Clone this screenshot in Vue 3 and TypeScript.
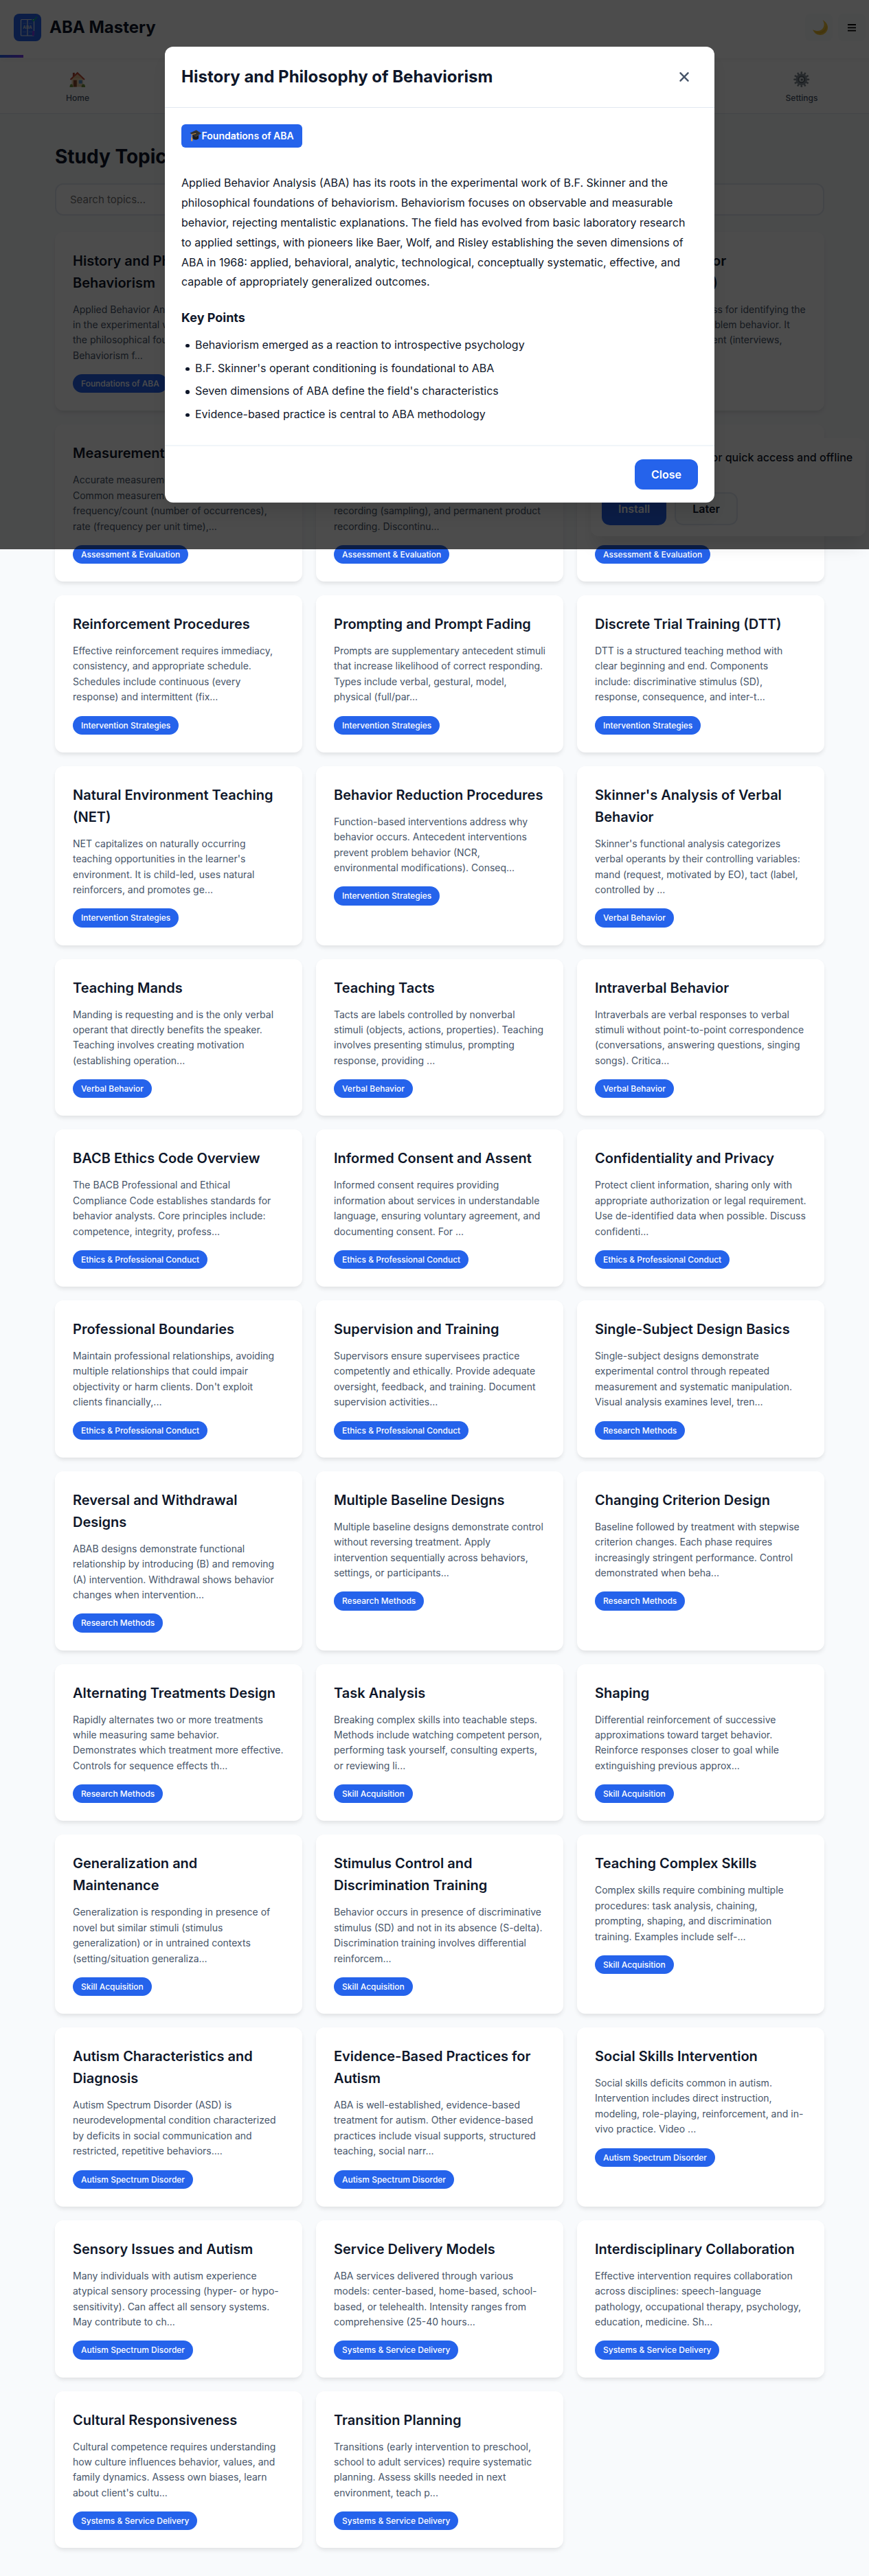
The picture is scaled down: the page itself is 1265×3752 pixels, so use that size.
<script setup lang="ts">
interface Topic {
  title: string
  excerpt: string
  category: string
}

const FOUNDATIONS = 'Foundations of ABA'
const ASSESSMENT = 'Assessment & Evaluation'
const INTERVENTION = 'Intervention Strategies'
const VERBAL = 'Verbal Behavior'
const ETHICS = 'Ethics & Professional Conduct'
const RESEARCH = 'Research Methods'
const SKILL = 'Skill Acquisition'
const AUTISM = 'Autism Spectrum Disorder'
const SYSTEMS = 'Systems & Service Delivery'

const topics: Topic[] = [
  { title: 'History and Philosophy of Behaviorism', excerpt: 'Applied Behavior Analysis (ABA) has its roots in the experimental work of B.F. Skinner and the philosophical foundations of behaviorism. Behaviorism f...', category: FOUNDATIONS },
  { title: 'Basic Principles of Behavior', excerpt: 'The basic principles of behavior include reinforcement, punishment, extinction, and stimulus control. These principles describe how behavior...', category: FOUNDATIONS },
  { title: 'Functional Behavior Assessment (FBA)', excerpt: 'FBA is a systematic process for identifying the\nfunction or purpose of problem behavior. It\nincludes indirect assessment (interviews,\nrating scales), direct...', category: ASSESSMENT },
  { title: 'Measurement Procedures', excerpt: 'Accurate measurement is essential.\nCommon measurement methods are\nfrequency/count (number of occurrences),\nrate (frequency per unit time),...', category: ASSESSMENT },
  { title: 'Data Collection Methods', excerpt: 'Data collection methods include\ncontinuous recording, interval\nrecording (sampling), and permanent product\nrecording. Discontinu...', category: ASSESSMENT },
  { title: 'Preference Assessments', excerpt: 'Preference assessments identify stimuli\nthat may serve as reinforcers. Methods\ninclude single stimulus, paired stimulus,\nand multiple...', category: ASSESSMENT },
  { title: 'Reinforcement Procedures', excerpt: 'Effective reinforcement requires immediacy, consistency, and appropriate schedule. Schedules include continuous (every response) and intermittent (fix...', category: INTERVENTION },
  { title: 'Prompting and Prompt Fading', excerpt: 'Prompts are supplementary antecedent stimuli that increase likelihood of correct responding. Types include verbal, gestural, model, physical (full/par...', category: INTERVENTION },
  { title: 'Discrete Trial Training (DTT)', excerpt: 'DTT is a structured teaching method with clear beginning and end. Components include: discriminative stimulus (SD), response, consequence, and inter-t...', category: INTERVENTION },
  { title: 'Natural Environment Teaching (NET)', excerpt: "NET capitalizes on naturally occurring teaching opportunities in the learner's environment. It is child-led, uses natural reinforcers, and promotes ge...", category: INTERVENTION },
  { title: 'Behavior Reduction Procedures', excerpt: 'Function-based interventions address why behavior occurs. Antecedent interventions prevent problem behavior (NCR, environmental modifications). Conseq...', category: INTERVENTION },
  { title: "Skinner's Analysis of Verbal Behavior", excerpt: "Skinner's functional analysis categorizes verbal operants by their controlling variables: mand (request, motivated by EO), tact (label, controlled by ...", category: VERBAL },
  { title: 'Teaching Mands', excerpt: 'Manding is requesting and is the only verbal operant that directly benefits the speaker. Teaching involves creating motivation (establishing operation...', category: VERBAL },
  { title: 'Teaching Tacts', excerpt: 'Tacts are labels controlled by nonverbal stimuli (objects, actions, properties). Teaching involves presenting stimulus, prompting response, providing ...', category: VERBAL },
  { title: 'Intraverbal Behavior', excerpt: 'Intraverbals are verbal responses to verbal stimuli without point-to-point correspondence (conversations, answering questions, singing songs). Critica...', category: VERBAL },
  { title: 'BACB Ethics Code Overview', excerpt: 'The BACB Professional and Ethical Compliance Code establishes standards for behavior analysts. Core principles include: competence, integrity, profess...', category: ETHICS },
  { title: 'Informed Consent and Assent', excerpt: 'Informed consent requires providing information about services in understandable language, ensuring voluntary agreement, and documenting consent. For ...', category: ETHICS },
  { title: 'Confidentiality and Privacy', excerpt: 'Protect client information, sharing only with appropriate authorization or legal requirement. Use de-identified data when possible. Discuss confidenti...', category: ETHICS },
  { title: 'Professional Boundaries', excerpt: "Maintain professional relationships, avoiding multiple relationships that could impair objectivity or harm clients. Don't exploit clients financially,...", category: ETHICS },
  { title: 'Supervision and Training', excerpt: 'Supervisors ensure supervisees practice competently and ethically. Provide adequate oversight, feedback, and training. Document supervision activities...', category: ETHICS },
  { title: 'Single-Subject Design Basics', excerpt: 'Single-subject designs demonstrate experimental control through repeated measurement and systematic manipulation. Visual analysis examines level, tren...', category: RESEARCH },
  { title: 'Reversal and Withdrawal Designs', excerpt: 'ABAB designs demonstrate functional relationship by introducing (B) and removing (A) intervention. Withdrawal shows behavior changes when intervention...', category: RESEARCH },
  { title: 'Multiple Baseline Designs', excerpt: 'Multiple baseline designs demonstrate control without reversing treatment. Apply intervention sequentially across behaviors, settings, or participants...', category: RESEARCH },
  { title: 'Changing Criterion Design', excerpt: 'Baseline followed by treatment with stepwise criterion changes. Each phase requires increasingly stringent performance. Control demonstrated when beha...', category: RESEARCH },
  { title: 'Alternating Treatments Design', excerpt: 'Rapidly alternates two or more treatments while measuring same behavior. Demonstrates which treatment more effective. Controls for sequence effects th...', category: RESEARCH },
  { title: 'Task Analysis', excerpt: 'Breaking complex skills into teachable steps. Methods include watching competent person, performing task yourself, consulting experts, or reviewing li...', category: SKILL },
  { title: 'Shaping', excerpt: 'Differential reinforcement of successive approximations toward target behavior. Reinforce responses closer to goal while extinguishing previous approx...', category: SKILL },
  { title: 'Generalization and Maintenance', excerpt: 'Generalization is responding in presence of novel but similar stimuli (stimulus generalization) or in untrained contexts (setting/situation generaliza...', category: SKILL },
  { title: 'Stimulus Control and Discrimination Training', excerpt: 'Behavior occurs in presence of discriminative stimulus (SD) and not in its absence (S-delta). Discrimination training involves differential reinforcem...', category: SKILL },
  { title: 'Teaching Complex Skills', excerpt: 'Complex skills require combining multiple procedures: task analysis, chaining, prompting, shaping, and discrimination training. Examples include self-...', category: SKILL },
  { title: 'Autism Characteristics and Diagnosis', excerpt: 'Autism Spectrum Disorder (ASD) is neurodevelopmental condition characterized by deficits in social communication and restricted, repetitive behaviors....', category: AUTISM },
  { title: 'Evidence-Based Practices for Autism', excerpt: 'ABA is well-established, evidence-based treatment for autism. Other evidence-based practices include visual supports, structured teaching, social narr...', category: AUTISM },
  { title: 'Social Skills Intervention', excerpt: 'Social skills deficits common in autism. Intervention includes direct instruction, modeling, role-playing, reinforcement, and in-vivo practice. Video ...', category: AUTISM },
  { title: 'Sensory Issues and Autism', excerpt: 'Many individuals with autism experience atypical sensory processing (hyper- or hypo-sensitivity). Can affect all sensory systems. May contribute to ch...', category: AUTISM },
  { title: 'Service Delivery Models', excerpt: 'ABA services delivered through various models: center-based, home-based, school-based, or telehealth. Intensity ranges from comprehensive (25-40 hours...', category: SYSTEMS },
  { title: 'Interdisciplinary Collaboration', excerpt: 'Effective intervention requires collaboration across disciplines: speech-language pathology, occupational therapy, psychology, education, medicine. Sh...', category: SYSTEMS },
  { title: 'Cultural Responsiveness', excerpt: "Cultural competence requires understanding how culture influences behavior, values, and family dynamics. Assess own biases, learn about client's cultu...", category: SYSTEMS },
  { title: 'Transition Planning', excerpt: 'Transitions (early intervention to preschool, school to adult services) require systematic planning. Assess skills needed in next environment, teach p...', category: SYSTEMS },
]

const keyPoints: string[] = [
  'Behaviorism emerged as a reaction to introspective psychology',
  "B.F. Skinner's operant conditioning is foundational to ABA",
  "Seven dimensions of ABA define the field's characteristics",
  'Evidence-based practice is central to ABA methodology',
]

const gearTeeth: number[] = Array.from({ length: 12 }, (_, i) => i * 30)
</script>

<template>
  <div class="page">
    <header class="header">
      <div class="brand">
        <svg class="logo" viewBox="0 0 40 40" aria-hidden="true">
          <rect width="40" height="40" rx="8" fill="#2563eb" />
          <rect x="10.5" y="8.5" width="19" height="23.5" rx="1" fill="none" stroke="#e2e8f0" stroke-width="1.2" />
          <path d="M20 8.5V32" stroke="#e2e8f0" stroke-width="1.2" />
          <path d="M13 14h5M22 14h5M13 26.500h5M22 26.500h5" stroke="#93c5fd" stroke-opacity=".6" stroke-width=".8" />
          <rect x="27" y="25" width="3" height="7" fill="#7c3aed" />
          <text x="20" y="21.800" text-anchor="middle" font-family="Inter, sans-serif" font-size="6.200" font-weight="700" fill="#cbd5e1">ABA</text>
          <path d="M26.500 8l2.300 2.500 5-6" fill="none" stroke="#10b981" stroke-width="1.500" />
        </svg>
        <span class="brand-name">ABA Mastery</span>
      </div>
      <div class="actions">
        <button class="icon-button" aria-label="Dark mode">
          <svg class="moon" width="22" height="22" viewBox="0 0 22 22"><path d="M14.500 0C19 2.500 22 6.500 22 11c0 6-5 11-11 11C6 22 2 19 0 14c6 3.500 12 2.500 15-2 2.500-4 2-8-.5-12z" fill="#f0c43c" /><path d="M20.500 8c.5 7-4 12-10 12-4 0-6.500-1.500-8.500-4 6 3 13 1.500 16-3.500z" fill="#d9a520" opacity=".55" /></svg>
        </button>
        <button class="icon-button" aria-label="Menu">
          <svg width="12" height="12" viewBox="0 0 12 12"><path d="M0 2h12M0 6.300h12M0 10.600h12" stroke="#000" stroke-width="1.800" /></svg>
        </button>
      </div>
    </header>
    <div class="progress"><div class="progress-fill"></div></div>
    <nav class="nav">
      <a class="nav-item">
        <svg class="nav-icon" viewBox="0 0 24 24">
          <path d="M5 2h3v6H5z" fill="#a8452f" />
          <path d="M3.500 11L12 3l8.500 8v12h-17z" fill="#e6c9a0" />
          <path d="M12 .8L.8 11.500l1.400 1.500L12 4.500l9.800 8.500 1.400-1.500z" fill="#c14a38" />
          <path d="M12 4l7 6H5z" fill="#d9b78c" />
          <rect x="6" y="13" width="5" height="10" fill="#8a4a30" />
          <rect x="13.500" y="12.500" width="6" height="6" fill="#5b8fc0" stroke="#f1e3cc" stroke-width=".8" />
          <path d="M.5 23.500c0-3 1-4.500 2.500-4.500s2.500 1.500 2.500 4.500zM18 23.500c0-3 1-4.500 2.800-4.500s2.700 1.500 2.700 4.500z" fill="#6f8f3f" />
        </svg>
        <span class="nav-label">Home</span>
      </a>
      <a class="nav-item">
        <svg class="nav-icon" viewBox="0 0 24 24">
          <g fill="#7f8991">
            <rect v-for="angle in gearTeeth" :key="angle" x="10.700" y=".3" width="2.600" height="5" rx=".6" :transform="`rotate(${angle} 12 12)`" />
          </g>
          <circle cx="12" cy="12" r="7" fill="#59626a" stroke="#87919a" stroke-width="3" />
          <circle cx="12" cy="12" r="3.600" fill="#cdd4d9" />
          <circle cx="12.500" cy="12.300" r="1.600" fill="#5b6369" />
        </svg>
        <span class="nav-label">Settings</span>
      </a>
    </nav>

    <main class="main">
      <h1 class="heading">Study Topics</h1>
      <input class="search" type="text" placeholder="Search topics..." />
      <div class="grid">
        <article v-for="topic in topics" :key="topic.title" class="card">
          <h3 class="card-title">{{ topic.title }}</h3>
          <p class="card-text">{{ topic.excerpt }}</p>
          <span class="tag">{{ topic.category }}</span>
        </article>
      </div>
    </main>

    <aside class="toast">
      <p class="toast-text">Install ABA Mastery for quick access and offline study!</p>
      <div class="toast-actions">
        <button class="btn primary">Install</button>
        <button class="btn secondary">Later</button>
      </div>
    </aside>

    <div class="overlay">
      <section class="modal">
        <div class="modal-head">
          <h2 class="modal-title">History and Philosophy of Behaviorism</h2>
          <button class="close" aria-label="Close">
            <svg width="14" height="14" viewBox="0 0 14 14"><path d="M1.500 1.300l11 11.400M12.500 1.300l-11 11.400" stroke="#475569" stroke-width="2.400" stroke-linecap="round" /></svg>
          </button>
        </div>
        <div class="modal-body">
          <span class="modal-tag">
            <svg class="cap" viewBox="0 0 18 18">
              <path d="M4.500 7v6c2 2.500 7 2.500 9 0V7z" fill="#1b1b1d" />
              <path d="M10 .5l7.500 5L9 10.800.5 5z" fill="#2f3033" />
              <path d="M10 .5l7.500 5-8.500 5.300v-1L16 5.500z" fill="#4a4b4f" />
              <path d="M9.500 5.500L3.200 7v5" fill="none" stroke="#e8a33a" stroke-width=".9" />
              <path d="M2.500 11.500h1.600l.4 5.500H2.200z" fill="#f0a93c" />
            </svg>Foundations of ABA</span>
          <p class="modal-text">Applied Behavior Analysis (ABA) has its roots in the experimental work of B.F. Skinner and the philosophical foundations of behaviorism. Behaviorism focuses on observable and measurable behavior, rejecting mentalistic explanations. The field has evolved from basic laboratory research to applied settings, with pioneers like Baer, Wolf, and Risley establishing the seven dimensions of ABA in 1968: applied, behavioral, analytic, technological, conceptually systematic, effective, and capable of appropriately generalized outcomes.</p>
          <h3 class="points-title">Key Points</h3>
          <ul class="points">
            <li v-for="point in keyPoints" :key="point">{{ point }}</li>
          </ul>
        </div>
        <div class="modal-foot">
          <button class="btn primary">Close</button>
        </div>
      </section>
    </div>
  </div>
</template>

<style>
body {
  background: #f8fafc;
  overflow-x: hidden;
}
</style>

<style scoped>
* {
  box-sizing: border-box;
  margin: 0;
  padding: 0;
}
.page {
  position: relative;
  width: 1280px;
  height: 3752px;
  overflow: hidden;
  background: #f8fafc;
  color: #0f172a;
  font-family: Inter, sans-serif;
  font-size: 16px;
  line-height: 1.6;
}
button,
input {
  font-family: inherit;
  border: 0;
  line-height: normal;
}
.header {
  display: flex;
  align-items: center;
  justify-content: space-between;
  height: 80px;
  padding: 0 20px;
  background: #fff;
}
.brand {
  display: flex;
  align-items: center;
  gap: 12px;
}
.logo {
  width: 40px;
  height: 40px;
}
.brand-name {
  font-size: 24px;
  font-weight: 700;
}
.actions {
  display: flex;
  gap: 8px;
}
.icon-button {
  display: flex;
  align-items: center;
  justify-content: center;
  width: 40px;
  height: 40px;
  border-radius: 8px;
  background: #f8fafc;
}
.moon {
  margin: 0 0 1px 3px;
}
.progress {
  position: relative;
  z-index: 1;
  height: 4px;
  background: #fff;
  box-shadow: 0 4px 6px -1px rgba(0, 0, 0, 0.1);
}
.progress-fill {
  width: 33.5px;
  height: 4px;
  background: linear-gradient(90deg, #2563eb, #7c3aed);
}
.nav {
  display: flex;
  justify-content: space-between;
  height: 82.400px;
  padding: 19.500px 73px 0;
  background: #fff;
  border-bottom: 1px solid #e2e8f0;
}
.nav-item {
  display: flex;
  flex-direction: column;
  align-items: center;
  gap: 6px;
  width: 80px;
  color: #475569;
}
.nav-icon {
  width: 23.500px;
  height: 23.500px;
}
.nav-label {
  font-size: 12px;
  font-weight: 500;
}
.main {
  padding: 40px 80px;
}
.heading {
  margin-bottom: 16px;
  font-size: 28px;
  font-weight: 700;
}
.search {
  display: block;
  width: 100%;
  height: 46.400px;
  margin-bottom: 24px;
  padding: 0 20px;
  border: 2px solid #e2e8f0;
  border-radius: 12px;
  background: #fff;
  font-size: 15px;
}
.search::placeholder {
  color: #757575;
}
.grid {
  display: grid;
  grid-template-columns: repeat(3, 1fr);
  gap: 20px;
}
.card {
  padding: 26px;
  border-radius: 12px;
  background: #fff;
  box-shadow: 0 4px 6px -1px rgba(0, 0, 0, 0.1);
}
.card-title {
  margin-bottom: 12px;
  font-size: 20px;
  font-weight: 600;
}
.card-text {
  margin-bottom: 16px;
  font-size: 14px;
  color: #475569;
  white-space: pre-line;
}
.tag {
  display: block;
  width: fit-content;
  padding: 4px 12px;
  border-radius: 14px;
  background: #2563eb;
  color: #fff;
  font-size: 12px;
  font-weight: 500;
}
.toast {
  position: absolute;
  top: 637.600px;
  left: 860px;
  width: 400px;
  padding: 16px;
  border-radius: 12px;
  background: #fff;
  box-shadow: 0 20px 25px -5px rgba(0, 0, 0, 0.1);
}
.toast-text {
  margin-bottom: 12px;
  font-weight: 500;
}
.toast-actions {
  display: flex;
  gap: 12px;
}
.btn {
  padding: 12px 24px;
  border-radius: 12px;
  font-size: 16px;
  font-weight: 600;
}
.primary {
  background: #2563eb;
  color: #fff;
}
.secondary {
  border: 2px solid #e2e8f0;
  background: #f8fafc;
  color: #0f172a;
}
.overlay {
  position: absolute;
  top: 0;
  left: 0;
  z-index: 2;
  display: flex;
  align-items: center;
  justify-content: center;
  width: 1280px;
  height: 800px;
  background: rgba(0, 0, 0, 0.7);
  overflow: hidden;
}
.modal {
  width: 800px;
  height: 664px;
  border-radius: 12px;
  background: #fff;
  box-shadow: 0 20px 25px -5px rgba(0, 0, 0, 0.1);
}
.modal-head {
  display: flex;
  align-items: center;
  justify-content: space-between;
  height: 89px;
  padding: 0 24px;
  border-bottom: 1px solid #e2e8f0;
}
.modal-title {
  font-size: 24px;
  font-weight: 700;
}
.close {
  display: flex;
  align-items: center;
  justify-content: center;
  width: 40px;
  height: 40px;
  background: none;
}
.modal-body {
  height: 491px;
  padding: 24px;
}
.modal-tag {
  display: flex;
  align-items: center;
  width: fit-content;
  padding: 6px 12px;
  border-radius: 6px;
  background: #2563eb;
  color: #fff;
  font-size: 14px;
  font-weight: 600;
}
.cap {
  width: 17.500px;
  height: 17.500px;
}
.modal-text {
  margin-top: 37px;
  line-height: 1.8;
}
.points-title {
  margin: 24px 0 12px;
  font-size: 18px;
  font-weight: 700;
}
.points {
  list-style: none;
}
.points li {
  display: flex;
  margin-bottom: 8px;
}
.points li::before {
  content: "";
  width: 5.500px;
  height: 5.500px;
  margin: 11px 8.300px 0 6.200px;
  border-radius: 50%;
  background: #0f172a;
}
.modal-foot {
  display: flex;
  justify-content: flex-end;
  padding: 19px 24px 20px;
  border-top: 2px solid #f1f5f9;
}
</style>
